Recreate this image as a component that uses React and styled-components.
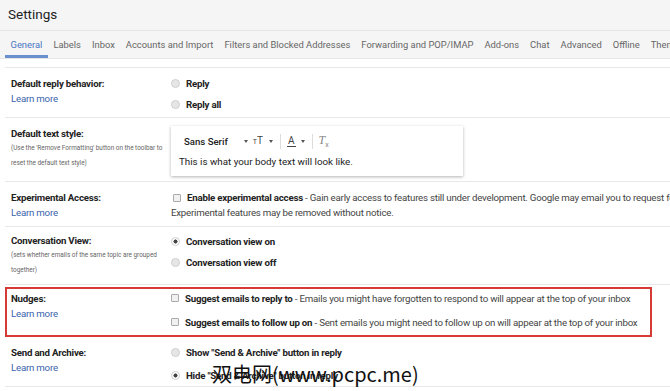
import React from "react";
import styled, { createGlobalStyle } from "styled-components";

const GlobalStyle = createGlobalStyle`
  html, body {
    margin: 0;
    padding: 0;
    background: #fff;
  }
  body {
    font-family: Roboto, "Liberation Sans", Arial, sans-serif;
    color: #222;
  }
`;

const Page = styled.div`
  position: relative;
  width: 670px;
  height: 391px;
  overflow: hidden;
  background: #fff;
`;

const Header = styled.div`
  height: 31px;
  box-sizing: border-box;
  padding: 6px 0 0 8px;
  background: #f5f5f5;
  border-bottom: 1px solid #e4e4e4;
  font-size: 13.5px;
  color: #222;
`;

const TabBar = styled.div`
  display: flex;
  height: 28px;
  box-sizing: border-box;
  padding-left: 5px;
  background: #f5f5f5;
  border-bottom: 1px solid #e6e6e6;
  white-space: nowrap;
`;

const Tab = styled.div`
  padding: 8px 5.5px 0;
  font-size: 9.4px;
  color: ${(p) => (p.$active ? "#4a77c4" : "#666")};
  border-bottom: 3px solid ${(p) => (p.$active ? "#6a8fce" : "transparent")};
`;

const Table = styled.div`
  margin: 8px 0 0 5px;
  border-top: 1px solid #e8e8e8;
  font-size: 9.7px;
  letter-spacing: -0.22px;
`;

const Row = styled.div`
  display: grid;
  grid-template-columns: 160px 1fr;
  height: ${(p) => p.$h}px;
  box-sizing: border-box;
  padding-left: 6px;
  border-bottom: 1px solid #e8e8e8;
  ${(p) =>
    p.$highlight &&
    `
    width: 647px;
    margin-top: 2px;
    border: 2px solid #d63a35;
    padding-left: 4px;
  `}
`;

const LabelCol = styled.div`
  padding-top: ${(p) => p.$pt}px;
  line-height: 15px;
  white-space: nowrap;
`;

const Label = styled.div`
  font-weight: 700;
  color: #222;
`;

const LearnMore = styled.div`
  color: #3b64ad;
`;

const Hint = styled.div`
  font-size: 6.4px;
  letter-spacing: 0;
  color: #666;
  line-height: 15px;
`;

const Options = styled.div`
  display: flex;
  flex-direction: column;
  padding-top: ${(p) => p.$pt}px;
  gap: ${(p) => p.$gap || 0}px;
`;

const Option = styled.div`
  display: flex;
  align-items: center;
  gap: 6px;
  height: ${(p) => p.$h || 21}px;
  white-space: nowrap;
  color: #222;
`;

const Strong = styled.span`
  font-weight: 700;
  color: #222;
`;

const Normal = styled.span`
  color: #444;
`;

const Radio = styled.span`
  width: 9px;
  height: 9px;
  flex: none;
  box-sizing: border-box;
  border-radius: 50%;
  border: 1px solid #cfcfcf;
  background: ${(p) =>
    p.$checked
      ? "radial-gradient(circle, #444 0 1.8px, #fff 2.3px)"
      : "#e6e6e6"};
`;

const Check = styled.span`
  width: 8px;
  height: 8px;
  flex: none;
  box-sizing: border-box;
  border: 1px solid #aaa;
  border-radius: 1px;
  background: #f1f1f1;
`;

const Para = styled.div`
  padding-top: 8px;
  line-height: 15px;
  white-space: nowrap;
  color: #444;
`;

const InlineCheck = styled(Check)`
  display: inline-block;
  margin: 0 6px 0 2px;
  vertical-align: -1px;
`;

const FontBox = styled.div`
  margin-top: 8px;
  width: 292px;
  height: 50px;
  box-sizing: border-box;
  background: #fff;
  box-shadow: 0 1px 3px rgba(0, 0, 0, 0.3);
  padding: 0 8px;
  letter-spacing: 0;
`;

const Toolbar = styled.div`
  display: flex;
  align-items: center;
  height: 30px;
  padding-left: 5px;
  font-size: 9.6px;
  color: #222;
`;

const FontName = styled.span`
  margin-right: 16px;
  font-weight: 500;
`;

const Caret = styled.span`
  width: 0;
  height: 0;
  border-left: 2.5px solid transparent;
  border-right: 2.5px solid transparent;
  border-top: 3px solid #555;
  margin: 0 ${(p) => p.$mr || 4}px 0 ${(p) => p.$ml || 0}px;
`;

const SizeIcon = styled.span`
  display: flex;
  align-items: flex-end;
  color: #444;
  font-size: 10px;
  line-height: 1;
  margin-right: 6px;
  small {
    font-size: 7px;
  }
`;

const Divider = styled.span`
  width: 1px;
  height: 15px;
  background: #ddd;
  margin: 0 6px 0 3px;
`;

const ColorA = styled.span`
  font-size: 10px;
  color: #444;
  border-bottom: 1.5px solid #444;
  line-height: 10px;
  padding: 0 1px;
  margin-right: 5px;
`;

const ClearIcon = styled.span`
  font-family: "Liberation Serif", serif;
  font-style: italic;
  font-size: 12px;
  color: #888;
  sub {
    font-family: Roboto, sans-serif;
    font-style: normal;
    font-size: 7px;
  }
`;

const BodyText = styled.div`
  font-size: 9.8px;
  color: #222;
`;

const Watermark = styled.div`
  position: absolute;
  left: 212px;
  top: 362px;
  font-family: "Noto Sans CJK SC", sans-serif;
  font-size: 20px;
  line-height: 24px;
  color: #111;
  white-space: nowrap;
`;

const tabs = [
  "General",
  "Labels",
  "Inbox",
  "Accounts and Import",
  "Filters and Blocked Addresses",
  "Forwarding and POP/IMAP",
  "Add-ons",
  "Chat",
  "Advanced",
  "Offline",
  "Themes",
];

export default function App() {
  return (
    <Page>
      <GlobalStyle />
      <Header>Settings</Header>
      <TabBar>
        {tabs.map((t, i) => (
          <Tab key={t} $active={i === 0}>
            {t}
          </Tab>
        ))}
      </TabBar>

      <Table>
        <Row $h={50}>
          <LabelCol $pt={8}>
            <Label>Default reply behavior:</Label>
            <LearnMore>Learn more</LearnMore>
          </LabelCol>
          <Options $pt={5}>
            <Option>
              <Radio />
              <Strong>Reply</Strong>
            </Option>
            <Option>
              <Radio />
              <Strong>Reply all</Strong>
            </Option>
          </Options>
        </Row>

        <Row $h={64}>
          <LabelCol $pt={8}>
            <Label>Default text style:</Label>
            <Hint>(Use the 'Remove Formatting' button on the toolbar to</Hint>
            <Hint>reset the default text style)</Hint>
          </LabelCol>
          <div>
            <FontBox>
              <Toolbar>
                <FontName>Sans Serif</FontName>
                <Caret $mr={5} />
                <SizeIcon>
                  <small>T</small>T
                </SizeIcon>
                <Caret />
                <Divider />
                <ColorA>A</ColorA>
                <Caret />
                <Divider />
                <ClearIcon>
                  T<sub>x</sub>
                </ClearIcon>
              </Toolbar>
              <BodyText>This is what your body text will look like.</BodyText>
            </FontBox>
          </div>
        </Row>

        <Row $h={45}>
          <LabelCol $pt={8}>
            <Label>Experimental Access:</Label>
            <LearnMore>Learn more</LearnMore>
          </LabelCol>
          <Para>
            <InlineCheck />
            <Strong>Enable experimental access</Strong> - Gain early access to
            features still under development. Google may email you to request
            feedback.
            <br />
            Experimental features may be removed without notice.
          </Para>
        </Row>

        <Row $h={58}>
          <LabelCol $pt={6}>
            <Label>Conversation View:</Label>
            <Hint>(sets whether emails of the same topic are grouped</Hint>
            <Hint>together)</Hint>
          </LabelCol>
          <Options $pt={4}>
            <Option>
              <Radio $checked />
              <Strong>Conversation view on</Strong>
            </Option>
            <Option>
              <Radio />
              <Strong>Conversation view off</Strong>
            </Option>
          </Options>
        </Row>

        <Row $h={50} $highlight>
          <LabelCol $pt={2}>
            <Label>Nudges:</Label>
            <LearnMore>Learn more</LearnMore>
          </LabelCol>
          <Options $pt={0} $gap={6}>
            <Option $h={18}>
              <Check />
              <span>
                <Strong>Suggest emails to reply to</Strong>
                <Normal>
                  {" "}
                  - Emails you might have forgotten to respond to will appear at
                  the top of your inbox
                </Normal>
              </span>
            </Option>
            <Option $h={18}>
              <Check />
              <span>
                <Strong>Suggest emails to follow up on</Strong>
                <Normal>
                  {" "}
                  - Sent emails you might need to follow up on will appear at
                  the top of your inbox
                </Normal>
              </span>
            </Option>
          </Options>
        </Row>

        <Row $h={50}>
          <LabelCol $pt={8}>
            <Label>Send and Archive:</Label>
            <LearnMore>Learn more</LearnMore>
          </LabelCol>
          <Options $pt={4}>
            <Option $h={23}>
              <Radio />
              <Strong>Show "Send &amp; Archive" button in reply</Strong>
            </Option>
            <Option $h={23}>
              <Radio $checked />
              <Strong>Hide "Send &amp; Archive" button in reply</Strong>
            </Option>
          </Options>
        </Row>
      </Table>

      <Watermark>双电网(www.pcpc.me)</Watermark>
    </Page>
  );
}
